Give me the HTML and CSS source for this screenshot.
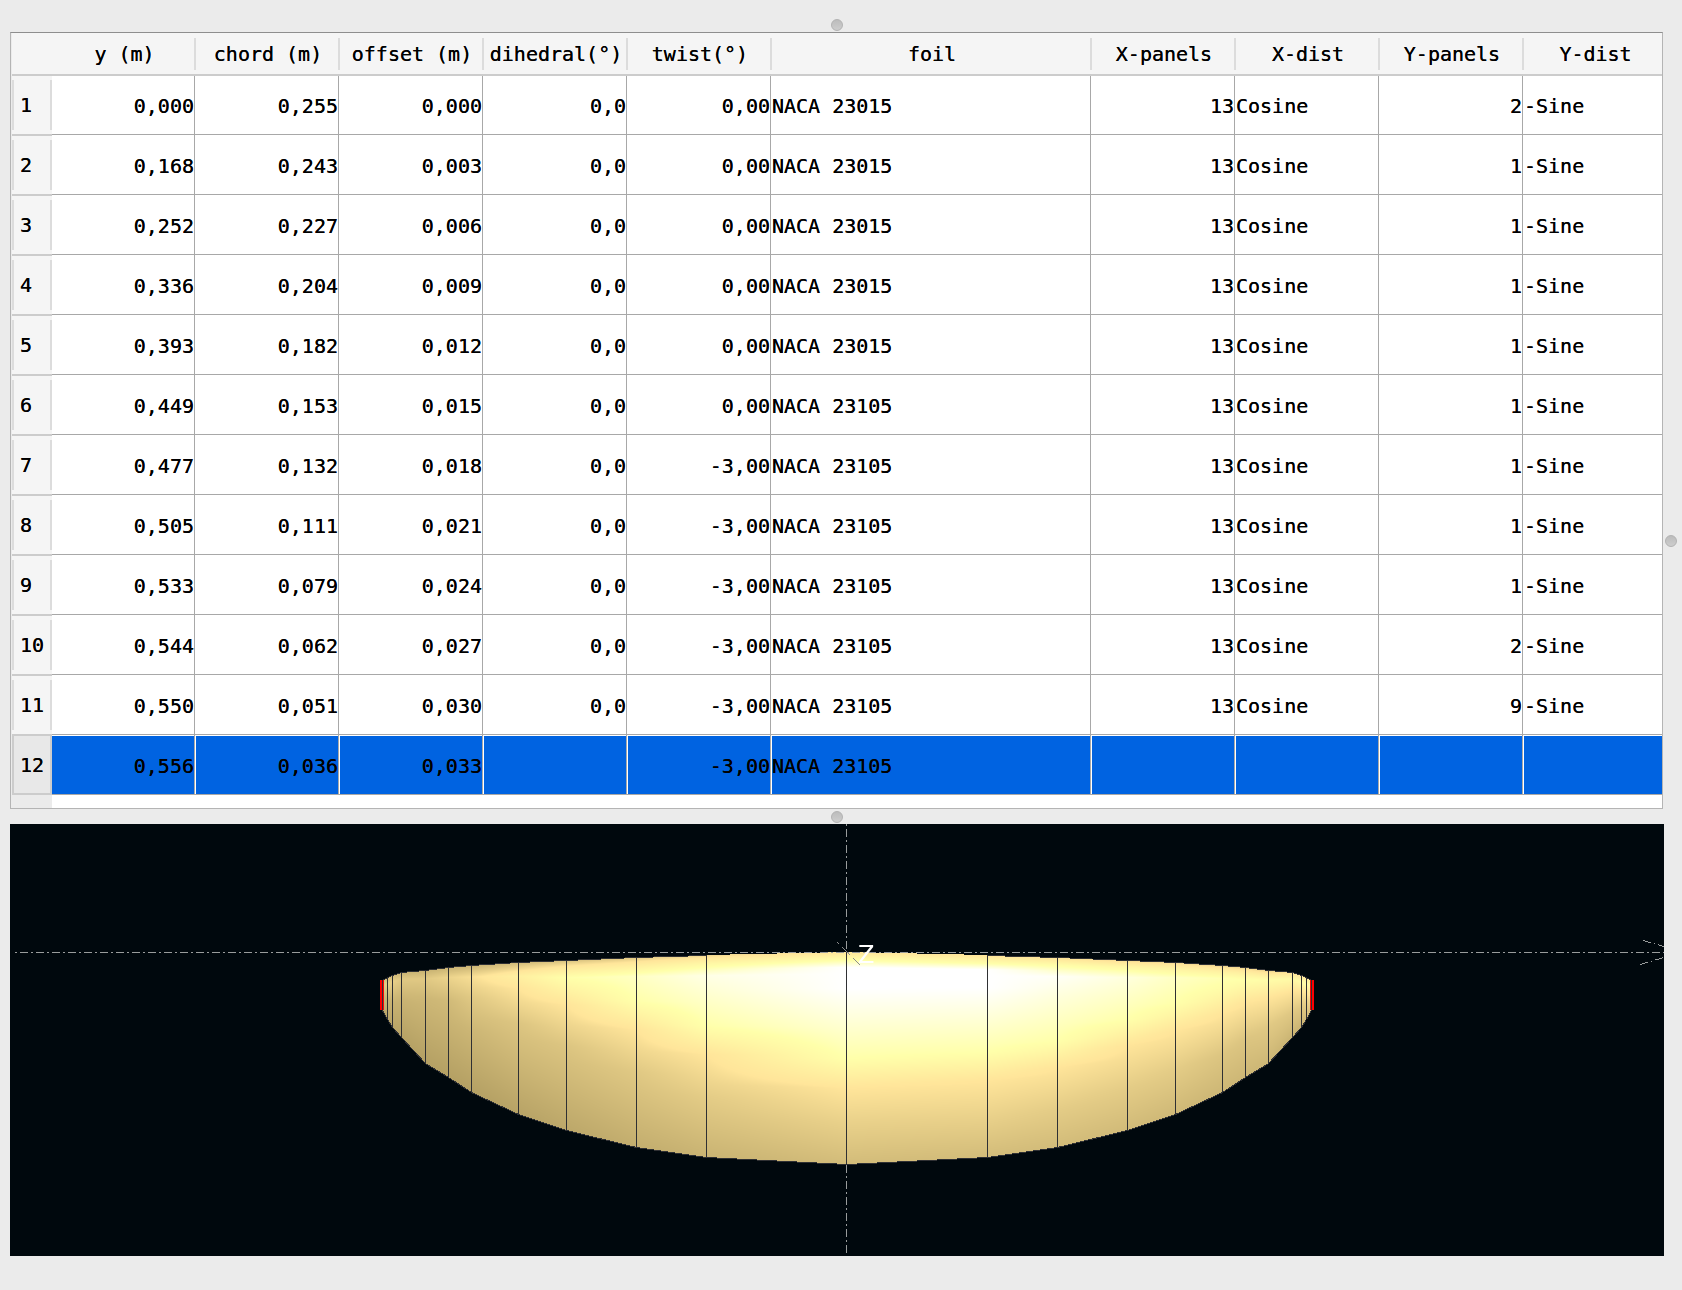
FILE: index.html
```html
<!DOCTYPE html>
<html lang="en">
<head>
<meta charset="utf-8">
<title>Wing definition</title>
<link rel="stylesheet" href="styles.css">
</head>
<body>
<main class="editor">
  <div class="gutter gutter-top" role="separator"><span class="grip"></span></div>

  <div class="frame">
    <table class="sections">
      <colgroup>
        <col class="col-index"><col class="col-first"><col class="col-value"><col class="col-value"><col class="col-value"><col class="col-value">
        <col><col class="col-value"><col class="col-value"><col class="col-value"><col class="col-last">
      </colgroup>
      <thead>
        <tr><td></td><th scope="col">y (m)</th><th scope="col">chord (m)</th><th scope="col">offset (m)</th><th scope="col">dihedral(°)</th><th scope="col">twist(°)</th><th scope="col">foil</th><th scope="col">X-panels</th><th scope="col">X-dist</th><th scope="col">Y-panels</th><th scope="col">Y-dist</th></tr>
      </thead>
      <tbody>
        <tr><th scope="row">1</th><td>0,000</td><td>0,255</td><td>0,000</td><td>0,0</td><td>0,00</td><td class="text">NACA 23015</td><td>13</td><td class="text">Cosine</td><td>2</td><td class="text">-Sine</td></tr>
        <tr><th scope="row">2</th><td>0,168</td><td>0,243</td><td>0,003</td><td>0,0</td><td>0,00</td><td class="text">NACA 23015</td><td>13</td><td class="text">Cosine</td><td>1</td><td class="text">-Sine</td></tr>
        <tr><th scope="row">3</th><td>0,252</td><td>0,227</td><td>0,006</td><td>0,0</td><td>0,00</td><td class="text">NACA 23015</td><td>13</td><td class="text">Cosine</td><td>1</td><td class="text">-Sine</td></tr>
        <tr><th scope="row">4</th><td>0,336</td><td>0,204</td><td>0,009</td><td>0,0</td><td>0,00</td><td class="text">NACA 23015</td><td>13</td><td class="text">Cosine</td><td>1</td><td class="text">-Sine</td></tr>
        <tr><th scope="row">5</th><td>0,393</td><td>0,182</td><td>0,012</td><td>0,0</td><td>0,00</td><td class="text">NACA 23015</td><td>13</td><td class="text">Cosine</td><td>1</td><td class="text">-Sine</td></tr>
        <tr><th scope="row">6</th><td>0,449</td><td>0,153</td><td>0,015</td><td>0,0</td><td>0,00</td><td class="text">NACA 23105</td><td>13</td><td class="text">Cosine</td><td>1</td><td class="text">-Sine</td></tr>
        <tr><th scope="row">7</th><td>0,477</td><td>0,132</td><td>0,018</td><td>0,0</td><td>-3,00</td><td class="text">NACA 23105</td><td>13</td><td class="text">Cosine</td><td>1</td><td class="text">-Sine</td></tr>
        <tr><th scope="row">8</th><td>0,505</td><td>0,111</td><td>0,021</td><td>0,0</td><td>-3,00</td><td class="text">NACA 23105</td><td>13</td><td class="text">Cosine</td><td>1</td><td class="text">-Sine</td></tr>
        <tr><th scope="row">9</th><td>0,533</td><td>0,079</td><td>0,024</td><td>0,0</td><td>-3,00</td><td class="text">NACA 23105</td><td>13</td><td class="text">Cosine</td><td>1</td><td class="text">-Sine</td></tr>
        <tr><th scope="row">10</th><td>0,544</td><td>0,062</td><td>0,027</td><td>0,0</td><td>-3,00</td><td class="text">NACA 23105</td><td>13</td><td class="text">Cosine</td><td>2</td><td class="text">-Sine</td></tr>
        <tr><th scope="row">11</th><td>0,550</td><td>0,051</td><td>0,030</td><td>0,0</td><td>-3,00</td><td class="text">NACA 23105</td><td>13</td><td class="text">Cosine</td><td>9</td><td class="text">-Sine</td></tr>
        <tr class="selected" aria-selected="true"><th scope="row">12</th><td>0,556</td><td>0,036</td><td>0,033</td><td></td><td>-3,00</td><td class="text">NACA 23105</td><td></td><td></td><td></td><td></td></tr>
      </tbody>
    </table>
  </div>

  <div class="gutter gutter-middle" role="separator"><span class="grip"></span></div>

  <div class="view">
    <svg class="layer" viewBox="10 824 1654 432" aria-hidden="true">
      <path class="axis" stroke-dashoffset="11" d="M846.5 824V1256"/>
    </svg>
    <canvas class="layer" id="wing" width="1654" height="432"></canvas>
    <svg class="layer" viewBox="10 824 1654 432" role="img" aria-label="Wing planform, top view">
      <path class="axis" stroke-dashoffset="11" d="M15 952.5H1664"/>
      <path class="axis" d="M1643 940.5L1664 946.5M1640 964.5L1664 957.5"/>
      <g id="outline"></g>
      <path class="tip" d="M380 980h2v30h-2zM383 980h1v30h-1zM1310 980h1v30h-1zM1312 980h2v30h-2z"/>
      <path class="zaxis" d="M837 942l2 2M842 947l8 8M853 958l7 7"/>
      <text class="label" x="858" y="963">Z</text>
    </svg>
  </div>
</main>
<aside class="side" role="separator"><span class="grip"></span></aside>
<script src="wing.js"></script>
</body>
</html>
```
FILE: styles.css
```css
* { box-sizing: border-box; }

body {
  margin: 0;
  min-height: 100vh;
  display: grid;
  grid-template-columns: minmax(0, 1fr) 18px;
  padding-left: 10px;
  background: #ebebeb;
  color: #000;
  font: 20px/24px "DejaVu Sans Mono", monospace;
}

.gutter {
  display: flex;
  justify-content: center;
  align-items: flex-end;
  padding-bottom: 1px;
}
.gutter-top { height: 32px; }
.gutter-middle { height: 15px; }

.grip {
  flex: none;
  width: 12px;
  height: 12px;
  border: 1px solid #b2b2b2;
  border-radius: 50%;
  background: linear-gradient(#bcbcbc, #cdcdcd);
}

.side {
  display: flex;
  flex-direction: column;
  align-items: center;
  padding-right: 4px;
}
.side::before { content: ""; flex: 72; }
.side::after { content: ""; flex: 100; }

.frame {
  margin-right: 1px;
  padding: 0 0 13px 1px;
  border: 1px solid #b4b4b4;
  border-top-color: #8e8e8e;
  background: linear-gradient(to right, #ebebeb 41px, #fff 41px);
}

.sections {
  width: 100%;
  table-layout: fixed;
  border-collapse: separate;
  border-spacing: 0;
  text-shadow: 0 0 0 #000;
}
.col-index { width: 40px; }
.col-first { width: 143px; }
.col-value { width: 144px; }
.col-last { width: 139px; }

.sections th { font-weight: 400; white-space: nowrap; }
.sections th, .sections td { padding: 0; }

thead th, thead td {
  height: 43px;
  border-bottom: 2px solid #ccc;
  background-color: #f5f5f5;
  --line: linear-gradient(#dcdcdc, #dcdcdc);
}
.sections thead th {
  padding-left: 2px;
  background-image: var(--line), var(--line);
  background-position: left 5px, right 5px;
  background-size: 1px 32px;
  background-repeat: no-repeat;
}
.sections thead th:nth-child(2) { background-image: none, var(--line); }
.sections thead th:last-child {
  padding-left: 6px;
  background-image: var(--line), none;
}

tbody tr { height: 60px; }
tbody tr:first-child { height: 59px; }

.sections tbody td {
  padding-top: 2px;
  border-right: 1px solid #a8a8a8;
  border-bottom: 1px solid #a8a8a8;
  background: #fff;
  text-align: right;
}
.sections tbody td.text { padding-left: 1px; text-align: left; }
.sections tbody td:last-child { border-right: 0; }

.sections tbody th {
  --line: linear-gradient(#dcdcdc, #dcdcdc);
  padding-left: 8px;
  border-top: 1px solid #ccc;
  border-bottom: 1px solid #ccc;
  background: var(--line) left bottom 4px / 2px 50px no-repeat, var(--line) right bottom 4px / 2px 50px no-repeat, #f5f5f5;
  text-align: left;
}
.sections tbody tr:first-child th { border-top: 0; }

.sections .selected td {
  background: #0063e1;
  box-shadow: inset 1px 1px 0 #fff;
}
.sections .selected td:nth-child(2) { box-shadow: inset 0 1px 0 #fff; }
.sections .selected th {
  padding-left: 6px;
  border: 2px solid #ccc;
  border-top-width: 1px;
  background: #e8e8e8;
}

.view {
  display: grid;
  background: #00080d;
}
.layer {
  grid-area: 1 / 1;
  display: block;
  width: 100%;
  height: auto;
}

.axis {
  fill: none;
  stroke: #999c9c;
  stroke-dasharray: 8 3 2 3;
  shape-rendering: crispEdges;
}
.zaxis { stroke: #8c8c8c; }
.rib, .edge {
  fill: none;
  stroke: #2f3033;
  shape-rendering: crispEdges;
}
.tip { fill: #f00; shape-rendering: crispEdges; }
.label {
  fill: #fff;
  font: 24px "DejaVu Sans", sans-serif;
}
```
FILE: wing.js
```js
// Stations from tip to tip: x, leading edge y, trailing edge y,
// then light level as [chord fraction, level] pairs.
const stations = [
  [382, 980, 1010, [[0, .5], [.2, .6], [1, .1]]],
  [387, 977, 1019, [[0, .4], [.15, .7], [.5, .3], [1, .1]]],
  [392, 975, 1027, [[0, .4], [.12, .7], [.5, .3], [1, .1]]],
  [401, 972, 1037, [[0, .3], [.1, .6], [.4, .3], [1, .05]]],
  [425, 970, 1063, [[0, .3], [.09, .6], [.3, .35], [1, .03]]],
  [448, 967, 1077, [[0, .3], [.09, .75], [.3, .4], [1, .03]]],
  [471, 965, 1092, [[0, .3], [.09, .9], [.25, .6], [.5, .35], [1, .03]]],
  [518, 962, 1114, [[0, .4], [.04, .8], [.09, 1.4], [.17, 1], [.4, .55], [1, .07]]],
  [566, 960, 1130, [[0, .5], [.04, 1.1], [.1, 2], [.26, 1], [.5, .55], [1, .13]]],
  [636, 957, 1147, [[0, .6], [.04, 1.3], [.1, 2.3], [.23, 2], [.38, 1], [.6, .6], [1, .22]]],
  [706, 955, 1157, [[0, .8], [.04, 1.7], [.1, 2.7], [.17, 2.5], [.35, 2], [.49, 1], [.7, .65], [1, .3]]],
  [846, 952, 1164, [[0, 1.1], [.04, 2.1], [.07, 3], [.17, 3], [.5, 2], [.64, 1], [.8, .72], [1, .42]]],
  [987, 955, 1157, [[0, 1], [.04, 2], [.07, 3], [.16, 3], [.48, 2], [.62, 1], [.8, .72], [1, .42]]],
  [1057, 957, 1147, [[0, .9], [.04, 1.9], [.1, 2.9], [.2, 2.6], [.44, 2], [.58, 1], [.8, .65], [1, .42]]],
  [1127, 960, 1130, [[0, .8], [.04, 1.7], [.1, 2.6], [.35, 2], [.5, 1], [.75, .65], [1, .4]]],
  [1175, 962, 1114, [[0, .8], [.04, 1.5], [.1, 2.3], [.27, 2], [.45, 1], [.7, .65], [1, .37]]],
  [1222, 965, 1092, [[0, .7], [.05, 1.5], [.1, 2.1], [.18, 1.9], [.38, 1], [.7, .55], [1, .35]]],
  [1245, 967, 1077, [[0, .7], [.05, 1.4], [.11, 2], [.32, 1], [.65, .55], [1, .35]]],
  [1268, 970, 1063, [[0, .7], [.1, 1.9], [.29, 1], [.6, .6], [1, .35]]],
  [1292, 972, 1037, [[0, .9], [.1, 1.8], [.28, 1], [.6, .6], [1, .3]]],
  [1301, 975, 1027, [[0, 1], [.12, 1.9], [.3, 1], [.6, .6], [1, .3]]],
  [1306, 977, 1019, [[0, 1], [.15, 2], [.35, 1], [.6, .7], [1, .4]]],
  [1311, 980, 1010, [[0, 1.4], [.2, 1.8], [.5, 1], [1, .5]]]
];

// Surface colour at light levels 0, 1, 2 and 3.
const ramp = [[178, 158, 98], [255, 229, 154], [255, 255, 170], [255, 255, 255]];
const originX = 10;
const originY = 824;

function level(knots, v) {
  for (let i = 1; i < knots.length; i++) {
    const [v0, a] = knots[i - 1];
    const [v1, b] = knots[i];
    if (v <= v1) return a + (b - a) * (v - v0) / (v1 - v0);
  }
  return knots[knots.length - 1][1];
}

function shade(b) {
  const i = Math.min(2, Math.floor(b));
  return ramp[i].map((c, k) => c + (ramp[i + 1][k] - c) * (b - i));
}

function drawSurface() {
  const canvas = document.getElementById("wing");
  const ctx = canvas.getContext("2d");
  const image = ctx.createImageData(canvas.width, canvas.height);
  for (let s = 1; s < stations.length; s++) {
    const [x0, t0, e0, k0] = stations[s - 1];
    const [x1, t1, e1, k1] = stations[s];
    for (let x = x0; x < x1; x++) {
      const u = (x - x0) / (x1 - x0);
      const top = t0 + (t1 - t0) * u;
      const end = e0 + (e1 - e0) * u;
      for (let y = Math.round(top); y < end; y++) {
        const v = Math.max(0, (y - top) / (end - top));
        const rgb = shade(level(k0, v) * (1 - u) + level(k1, v) * u);
        const p = 4 * ((y - originY) * canvas.width + x - originX);
        image.data[p] = rgb[0];
        image.data[p + 1] = rgb[1];
        image.data[p + 2] = rgb[2];
        image.data[p + 3] = 255;
      }
    }
  }
  ctx.putImageData(image, 0, 0);
}

function addPath(className, d) {
  const path = document.createElementNS("http://www.w3.org/2000/svg", "path");
  path.setAttribute("class", className);
  path.setAttribute("d", d);
  document.getElementById("outline").append(path);
}

drawSurface();
addPath("edge", "M" + stations.slice(0, 11).map(s => `${s[0] + .5} ${s[1] + .5}`).join("L"));
addPath("edge", "M" + stations.slice(12).map(s => `${s[0] + .5} ${s[1] + .5}`).join("L"));
addPath("edge", "M" + stations.map(s => `${s[0] + .5} ${s[2] + .5}`).join("L"));
addPath("rib", stations.map(s => `M${s[0] + .5} ${s[1]}V${s[2]}`).join(""));
```
